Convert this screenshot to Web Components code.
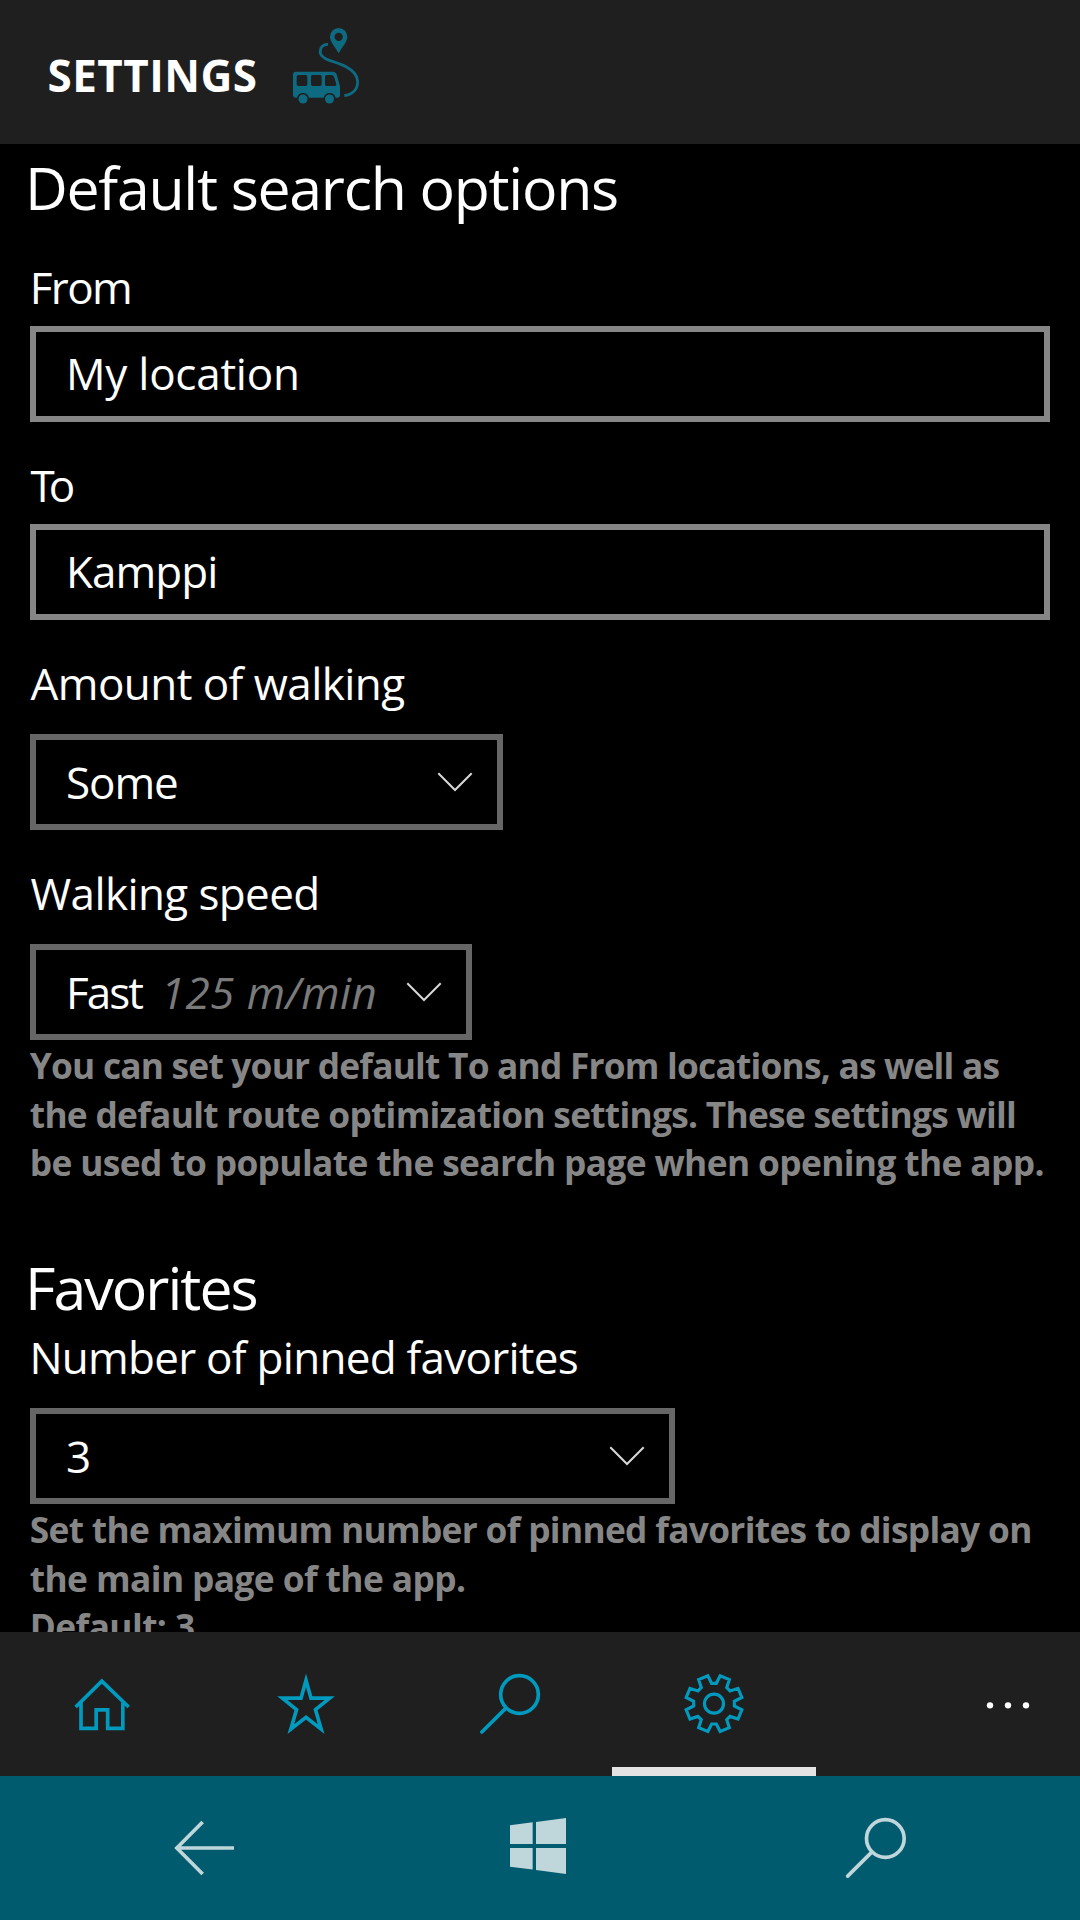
<!DOCTYPE html>
<html lang="en">
<head>
<meta charset="utf-8">
<title>Settings</title>
<style>
html,body{margin:0;padding:0;background:#000}
body{width:1080px;height:1920px;overflow:hidden;color:#fff;font-family:"Open Sans","Noto Sans",sans-serif;font-size:44px}
</style>
</head>
<body>
<settings-app></settings-app>
<script>
function define(name, html, setup) {
  const tpl = document.createElement('template');
  tpl.innerHTML = html;
  customElements.define(name, class extends HTMLElement {
    constructor() {
      super();
      this.attachShadow({mode: 'open'}).append(tpl.content.cloneNode(true));
    }
    connectedCallback() { if (setup) setup(this, this.shadowRoot); }
  });
}

// Bus with a winding route that ends in a map pin
define('route-logo', `
<style>:host{display:block;width:110px;height:110px}svg{display:block}</style>
<svg width="110" height="110" viewBox="0 0 330 330" fill="#0e6a80">
  <path fill-rule="evenodd" d="M78 185H189Q197 185 200 193L209 225Q210 230 210 236V256Q210 263 203 263H197A18.5 18.5 0 0 0 161 263H117A18.5 18.5 0 0 0 81 263H76Q69 263 69 256V194Q69 185 78 185Z
  M85 195Q80 195 80 200V223Q80 228 85 228H107Q112 228 112 223V200Q112 195 107 195Z
  M128 195Q123 195 123 200V223Q123 228 128 228H150Q155 228 155 223V200Q155 195 150 195Z
  M170 195Q165 195 165 200V223Q165 228 170 228H194Q200 228 199 222L192 200Q190 195 185 195Z"/>
  <circle cx="99" cy="267" r="13.5"/><circle cx="178.500" cy="267" r="13.500"/>
  <path fill-rule="evenodd" d="M206 54A26 26 0 0 1 232 80C232 96 217 109 206 130C195 109 180 96 180 80A26 26 0 0 1 206 54ZM206 68A12.500 12.500 0 1 0 206 93A12.500 12.500 0 1 0 206 68Z"/>
  <path fill="none" stroke="#0e6a80" stroke-width="8.500" d="M174 103C160 102 150 112 150.500 126C151 140 164 146 178 151C196 157 212 162 228 170C249 181 263 195 263 216C263 240 245 255 223 256.500"/>
</svg>`);

define('app-header', `
<style>
:host{display:flex;height:144px;box-sizing:border-box;padding-left:47.600px;background:#1f1f1f}
h1{margin:0;padding-top:30px;width:222.400px;font-size:44px;line-height:90px;font-weight:700;letter-spacing:.45px}
route-logo{margin-top:10px}
</style>
<h1><slot></slot></h1><route-logo></route-logo>`);

define('section-title', `
<style>:host{display:block;height:76px;padding-left:25px;font-size:59px;line-height:76px;white-space:nowrap}</style>
<slot></slot>`);

define('field-label', `
<style>:host{display:block;height:60px;line-height:62px;padding-left:30.500px;white-space:nowrap}</style>
<slot></slot>`);

define('text-field', `
<style>
:host{display:block;box-sizing:border-box;height:96px;margin:10px 30px 32px;padding-left:30px;border:6px solid #868686;line-height:82px;white-space:nowrap}
</style>
<slot></slot>`);

define('select-field', `
<style>
:host{display:flex;justify-content:space-between;box-sizing:border-box;height:96px;margin:22px 0 0 30px;padding:0 24px 0 30px;border:6px solid #666;line-height:84px;white-space:nowrap}
svg{display:block;margin-top:31px}
</style>
<div><slot></slot></div>
<svg width="36" height="22" viewBox="0 0 36 22" fill="none" stroke="#d8d8d8" stroke-width="2"><path d="M1.300 2.300L18 19L34.700 2.300"/></svg>`);

define('help-text', `
<style>:host{display:block;padding:1px 0 0 29.800px;font-size:35.300px;font-weight:700;line-height:48.500px;color:#868686;white-space:nowrap}</style>
<slot></slot>`);

define('help-line', `<style>:host{display:block}</style><slot></slot>`);

define('settings-page', `
<style>
:host{display:block;height:1488px;overflow:hidden;box-sizing:border-box;padding-top:5px}
</style>
<slot></slot>`);

define('tab-item', `
<style>
:host{display:flex;flex-direction:column;width:204px;height:144px;box-sizing:border-box}
:host([active]){border-bottom:9px solid #e3e3e3}
::slotted(svg){display:block;flex:none;width:204px;height:144px;fill:none;stroke:#009abf;stroke-width:11}
</style>
<slot></slot>`);

define('tab-bar', `
<style>
:host{display:flex;height:144px;background:#1f1f1f}
.more{width:264px;height:144px}
</style>
<tab-item><svg viewBox="0 0 612 432"><g transform="translate(150,54)"><path stroke-linejoin="miter" d="M77 171L155.500 93.500L236 171M93 158V235H138.500V179.500H173V235H218.500V158"/></g></svg></tab-item>
<tab-item><svg viewBox="0 0 612 432"><g transform="translate(-462,54)"><path stroke-miterlimit="10" d="M768 91L783 144.500H839L796.500 179L813.500 237.500L768 202L722.500 237.500L739.500 179L697 144.500H753Z"/></g></svg></tab-item>
<tab-item><svg viewBox="0 0 612 432"><g transform="translate(126,54)"><circle cx="208.500" cy="133.500" r="56.500"/><path stroke-linecap="round" d="M167 175L95.500 246"/></g></svg></tab-item>
<tab-item active><svg viewBox="0 0 612 432"><g transform="translate(306,215)"><path class="gear" stroke-width="9.500"/><circle r="28.500" stroke-width="9.500"/></g></svg></tab-item>
<svg class="more" viewBox="0 0 792 432" fill="#fff"><circle cx="522" cy="220" r="9.500"/><circle cx="576" cy="220" r="9.500"/><circle cx="630" cy="220" r="9.500"/></svg>`,
(host, root) => {
  // One tooth, turned eight times around the centre
  const pts = [];
  for (let i = 0; i < 8; i++) {
    const a = i * Math.PI / 4, c = Math.cos(a), s = Math.sin(a);
    for (const [x, y] of [[-7, -61], [7, -61], [18.5, -83.5]]) pts.push([x * c - y * s, x * s + y * c]);
    const b = a + Math.PI / 4, cb = Math.cos(b), sb = Math.sin(b);
    pts.push([-18.5 * cb + 83.5 * sb, -18.5 * sb - 83.5 * cb]);
  }
  root.querySelector('.gear').setAttribute('d', 'M' + pts.map(p => p.map(n => n.toFixed(1)).join(' ')).join('L') + 'Z');
});

define('nav-bar', `
<style>
:host{display:flex;height:144px;background:#005b6f}
svg{display:block;width:360px;height:144px;fill:none;stroke:#bfd6db;stroke-width:11}
.win{fill:#bfd6db;stroke:none}
</style>
<svg viewBox="0 0 1080 432"><g transform="translate(450,42)"><path d="M158 96L80.500 174L158 252M82 174H252"/></g></svg>
<svg viewBox="0 0 1080 432"><g class="win" transform="translate(-630,42)"><path d="M1080 106L1148 97V162H1080ZM1158 96L1248 84V162H1158ZM1080 174H1148V238.500L1080 230ZM1158 174H1248V252L1158 240Z"/></g></svg>
<svg viewBox="0 0 1080 432"><g transform="translate(300,-348)"><circle cx="196" cy="535.500" r="56.500"/><path stroke-linecap="round" d="M154.500 577L83 648.500"/></g></svg>`);

define('settings-app', `
<style>
:host{display:flex;flex-direction:column;width:1080px;height:1920px;background:#000}
.hint{font-style:italic;color:#7a7a7a;letter-spacing:.42px;margin-left:19px}
</style>
<app-header>SETTINGS</app-header>
<settings-page>
  <section-title style="letter-spacing:-1.290px">Default search options</section-title>
  <field-label style="margin-top:31px;padding-left:29.700px;letter-spacing:-1.600px">From</field-label>
  <text-field style="letter-spacing:-.250px">My location</text-field>
  <field-label style="letter-spacing:-6px">To</field-label>
  <text-field style="letter-spacing:-.930px">Kamppi</text-field>
  <field-label style="letter-spacing:-.560px">Amount of walking</field-label>
  <select-field style="width:473px;letter-spacing:-1.100px">Some</select-field>
  <field-label style="margin-top:32px;letter-spacing:-.600px">Walking speed</field-label>
  <select-field style="width:442px;letter-spacing:-2px">Fast<span class="hint">125 m/min</span></select-field>
  <help-text>
    <help-line style="letter-spacing:-.790px">You can set your default To and From locations, as well as</help-line>
    <help-line style="letter-spacing:-.730px">the default route optimization settings. These settings will</help-line>
    <help-line style="letter-spacing:-.630px">be used to populate the search page when opening the app.</help-line>
  </help-text>
  <section-title style="margin-top:62.500px;letter-spacing:-1.980px">Favorites</section-title>
  <field-label style="margin-top:1px;padding-left:29.400px;letter-spacing:-.737px">Number of pinned favorites</field-label>
  <select-field style="width:645px">3</select-field>
  <help-text>
    <help-line style="letter-spacing:-.690px">Set the maximum number of pinned favorites to display on</help-line>
    <help-line style="letter-spacing:-.600px">the main page of the app.</help-line>
    <help-line style="letter-spacing:-.599px">Default: 3</help-line>
  </help-text>
</settings-page>
<tab-bar></tab-bar>
<nav-bar></nav-bar>`);
</script>
</body>
</html>
